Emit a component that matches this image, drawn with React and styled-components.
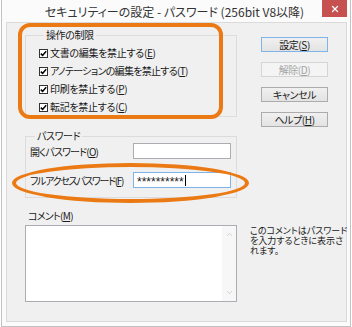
import styled, { createGlobalStyle } from 'styled-components'
import { X, ChevronUp, ChevronDown } from 'lucide-react'

const Global = createGlobalStyle`
  html, body { margin: 0; padding: 0; background: #fff; }
  body {
    font-family: "Noto Sans CJK JP", "Noto Sans", sans-serif;
    font-feature-settings: "palt";
    color: #1a1a1a;
  }
  u { text-underline-offset: 1px; text-decoration-thickness: 1px; }
`

const Window = styled.div`
  position: relative;
  box-sizing: border-box;
  width: 350px;
  height: 327px;
  margin-left: 1px;
  border: 1px solid #c2c2c2;
  border-top: none;
  background: #fbfbfb;
  display: flex;
  flex-direction: column;
`

const TitleBar = styled.div`
  height: 22px;
  flex: none;
  display: grid;
  grid-template-columns: 25px 1fr 25px;
  padding-right: 3px;
`

const Title = styled.div`
  grid-column: 2;
  text-align: center;
  font-size: 12px;
  line-height: 24px;
  color: #333;
  white-space: nowrap;
`

const CloseButton = styled.div`
  height: 17px;
  background: #c75050;
  color: #fff;
  display: flex;
  align-items: center;
  justify-content: center;
`

const Client = styled.div`
  flex: 1;
  margin: 0 3px 4px 4px;
  border: 1px solid #dadada;
  background: #f0f0f0;
  padding: 6px 0 0 18px;
  display: grid;
  grid-template-columns: 212px 1fr;
  column-gap: 13px;
  grid-template-areas:
    "ops buttons"
    "pw buttons"
    "label ."
    "comment note";
  align-content: start;
  font-size: 10px;
  letter-spacing: -0.4px;
  white-space: nowrap;
`

const Group = styled.fieldset`
  grid-area: ${p => p.$area};
  margin: ${p => p.$mt || 0}px 0 0 0;
  min-inline-size: 0;
  border: 1px solid #dcdcdc;
  padding: ${p => p.$pad};
`

const Legend = styled.legend`
  margin-left: 5px;
  padding: 0 2px;
  font-size: 10px;
  line-height: 12px;
`

const CheckRow = styled.label`
  display: flex;
  align-items: center;
  gap: 2px;
  height: 18px;
  line-height: 12px;
  letter-spacing: ${p => p.$tight ? '-0.7px' : '-0.3px'};
`

const Box = styled.span`
  box-sizing: border-box;
  width: 9px;
  height: 9px;
  border: 1px solid #333;
  background: #fff;
  display: flex;
  align-items: center;
  justify-content: center;
`

const PwGrid = styled.div`
  display: grid;
  grid-template-columns: 103px 98px;
  row-gap: 13px;
  align-items: center;
`

const PwLabel = styled.span`
  letter-spacing: ${p => p.$tight ? '-1.3px' : '-0.8px'};
`

const Input = styled.div`
  box-sizing: border-box;
  height: 16px;
  border: 1px solid ${p => (p.$focus ? '#7eb4ea' : '#abadb3')};
  background: #fff;
  display: flex;
  align-items: center;
  padding: 3px 0 0 3px;
  font-family: "Liberation Sans", sans-serif;
  font-size: 12px;
  letter-spacing: 0;
`

const Caret = styled.span`
  width: 1px;
  height: 11px;
  background: #000;
  margin: -3px 0 0 1px;
`

const FieldLabel = styled.div`
  grid-area: label;
  margin-top: 12px;
  line-height: 12px;
  margin-left: 3px;
  letter-spacing: -0.7px;
`

const TextArea = styled.div`
  grid-area: comment;
  margin-top: 3px;
  box-sizing: border-box;
  height: 77px;
  border: 1px solid #abadb3;
  background: #fff;
  display: flex;
  justify-content: flex-end;
`

const ScrollBar = styled.div`
  width: 14px;
  background: #f7f7f7;
  display: flex;
  flex-direction: column;
  justify-content: space-between;
  align-items: center;
  padding: 4px 0;
  color: #b5b5b5;
`

const Note = styled.div`
  grid-area: note;
  margin-top: 4px;
  font-size: 9px;
  line-height: 10px;
  letter-spacing: 0;
`

const Buttons = styled.div`
  grid-area: buttons;
  display: flex;
  flex-direction: column;
  gap: 10px;
  padding: 8px 0 0 11px;
`

const Button = styled.div`
  box-sizing: border-box;
  width: 67px;
  height: 15px;
  display: flex;
  align-items: center;
  justify-content: center;
  font-size: 10px;
  border: 1px solid ${p => (p.$default ? '#7eb4ea' : p.$disabled ? '#d5d5d5' : '#acacac')};
  background: ${p => (p.$disabled ? '#f4f4f4' : 'linear-gradient(#f0f0f0, #e3e3e3)')};
  color: ${p => (p.$disabled ? '#a3a3a3' : '#1a1a1a')};
`

const RoundMark = styled.div`
  position: absolute;
  left: 16px;
  top: 23px;
  width: 205px;
  height: 96px;
  box-sizing: border-box;
  border: 4px solid #eb7a14;
  border-radius: 12px;
  pointer-events: none;
`

const OvalMark = styled.div`
  position: absolute;
  left: 10px;
  top: 163px;
  width: 237px;
  height: 40px;
  box-sizing: border-box;
  border: 4px solid #eb7a14;
  border-radius: 50%;
  pointer-events: none;
`

const Check = () => (
  <Box>
    <svg width="7" height="7" viewBox="0 0 7 7">
      <path d="M0.8 3.6 L2.6 5.4 L6.2 1.2" fill="none" stroke="#000" strokeWidth="1.5" />
    </svg>
  </Box>
)

const options = [
  ['文書の編集を禁止する', 'E'],
  ['アノテーションの編集を禁止する', 'T', true],
  ['印刷を禁止する', 'P'],
  ['転記を禁止する', 'C'],
]

export default function App() {
  return (
    <>
      <Global />
      <Window>
        <TitleBar>
          <Title>セキュリティーの設定 - パスワード (256bit V8以降)</Title>
          <CloseButton>
            <X size={10} strokeWidth={3} />
          </CloseButton>
        </TitleBar>
        <Client>
          <Group $area="ops" $pad="3px 0 0 13px">
            <Legend>操作の制限</Legend>
            {options.map(([text, key, tight]) => (
              <CheckRow key={key} $tight={tight}>
                <Check />
                <span>
                  {text}(<u>{key}</u>)
                </span>
              </CheckRow>
            ))}
          </Group>

          <Buttons>
            <Button $default>
              設定(<u>S</u>)
            </Button>
            <Button $disabled>
              解除(<u>D</u>)
            </Button>
            <Button>キャンセル</Button>
            <Button>
              ヘルプ(<u>H</u>)
            </Button>
          </Buttons>

          <Group $area="pw" $mt={13} $pad="1px 0 9px 4px">
            <Legend>パスワード</Legend>
            <PwGrid>
              <PwLabel>
                開くパスワード(<u>O</u>)
              </PwLabel>
              <Input />
              <PwLabel $tight>
                フルアクセスパスワード(<u>F</u>)
              </PwLabel>
              <Input $focus>
                **********
                <Caret />
              </Input>
            </PwGrid>
          </Group>

          <FieldLabel>
            コメント(<u>M</u>)
          </FieldLabel>
          <TextArea>
            <ScrollBar>
              <ChevronUp size={9} strokeWidth={1.5} />
              <ChevronDown size={9} strokeWidth={1.5} />
            </ScrollBar>
          </TextArea>
          <Note>
            このコメントはパスワード
            <br />
            を入力するときに表示さ
            <br />
            れます。
          </Note>
        </Client>
        <RoundMark />
        <OvalMark />
      </Window>
    </>
  )
}
